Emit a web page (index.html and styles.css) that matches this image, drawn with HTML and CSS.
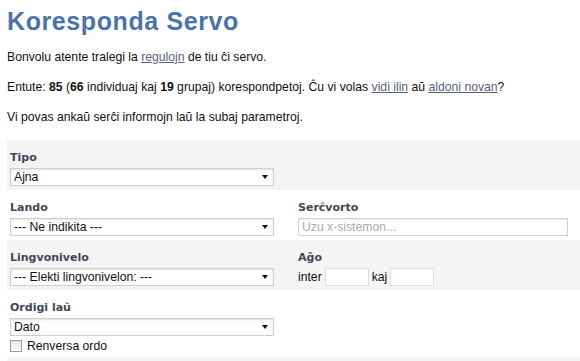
FILE: index.html
```html
<!DOCTYPE html>
<html>
<head>
  <meta charset="utf-8">
  <title>Koresponda Servo</title>
  <link rel="stylesheet" href="styles.css">
</head>

<body>
    <h1>Koresponda Servo</h1>
    <p>Bonvolu atente tralegi la <a href="#">regulojn</a> de tiu ĉi servo.</p>
    <p>Entute: <b>85</b> (<b>66</b> individuaj kaj <b>19</b> grupaj) korespondpetoj. Ĉu vi volas <a href="#">vidi ilin</a> aŭ <a href="#">aldoni novan</a>?</p>
    <p>Vi povas ankaŭ serĉi informojn laŭ la subaj parametroj.</p>

    <form class="search">
        <div class="row grey">
            <div class="field">
                <label>Tipo</label>
                <div class="select"><span>Ajna</span><i class="arrow"></i></div>
            </div>
        </div>
        <div class="row">
            <div class="field">
                <label>Lando</label>
                <div class="select"><span>--- Ne indikita ---</span><i class="arrow"></i></div>
            </div>
            <div class="field right">
                <label>Serĉvorto</label>
                <input type="text" class="text" placeholder="Uzu x-sistemon...">
            </div>
        </div>
        <div class="row grey">
            <div class="field">
                <label>Lingvonivelo</label>
                <div class="select"><span>--- Elekti lingvonivelon: ---</span><i class="arrow"></i></div>
            </div>
            <div class="field right">
                <label>Aĝo</label>
                <div class="age">inter <input type="text" class="small"> kaj <input type="text" class="small"></div>
            </div>
        </div>
        <div class="row tall">
            <div class="field">
                <label>Ordigi laŭ</label>
                <div class="select"><span>Dato</span><i class="arrow"></i></div>
                <div class="check"><span class="box"></span>Renversa ordo</div>
            </div>
        </div>
        <div class="row grey last"></div>
    </form>
</body>
</html>
```

FILE: styles.css
```css
body {
    margin: 0 0 0 7px;
    font-family: "Liberation Sans", Arial, sans-serif;
    font-size: 12.2px;
    color: #111;
    background: #fff;
}

h1 {
    font-family: "Liberation Sans", Arial, sans-serif;
    font-size: 25px;
    font-weight: bold;
    letter-spacing: 0.6px;
    color: #4a73ab;
    margin: 7px 0 0 0;
    line-height: 28px;
}

p {
    margin: 15px 0 0 0;
    line-height: 15px;
}

a {
    color: #56627e;
}

.search {
    margin-top: 15px;
}

.row {
    display: grid;
    grid-template-columns: 288px 1fr;
    height: 50px;
}

.row.tall {
    height: 67px;
}

.grey {
    background: #f4f4f4;
}

.last {
    height: 10px;
}

.field {
    padding: 10px 0 0 3px;
}

.field.right {
    padding-left: 3px;
}

label {
    display: block;
    font-family: "DejaVu Sans", Verdana, sans-serif;
    font-weight: bold;
    font-size: 11px;
    color: #3e4856;
    height: 16px;
    line-height: 16px;
    margin-bottom: 2px;
}

.select {
    display: flex;
    align-items: center;
    justify-content: space-between;
    box-sizing: border-box;
    width: 264px;
    height: 18px;
    padding: 0 5px 0 3px;
    background: #fff;
    border: 1px solid #cfcfcf;
    box-shadow: inset 0 1px 2px rgba(0, 0, 0, 0.12);
    font-size: 12.2px;
}

.arrow {
    width: 0;
    height: 0;
    border-left: 3.5px solid transparent;
    border-right: 3.5px solid transparent;
    border-top: 4px solid #111;
}

.text {
    box-sizing: border-box;
    width: 270px;
    height: 18px;
    margin: 0;
    padding: 0 3px;
    border: 1px solid #d2d2d2;
    box-shadow: inset 0 1px 2px rgba(0, 0, 0, 0.08);
    font-family: "Liberation Sans", Arial, sans-serif;
    font-size: 12.2px;
}

.text::placeholder {
    color: #aaa;
}

.age {
    display: flex;
    align-items: center;
    gap: 3px;
    height: 18px;
}

.small {
    box-sizing: border-box;
    width: 44px;
    height: 18px;
    margin: 0;
    border: 1px solid #dcdcdc;
    background: #fff;
}

.check {
    display: flex;
    align-items: center;
    gap: 5px;
    margin-top: 2px;
    height: 16px;
}

.box {
    display: inline-block;
    box-sizing: border-box;
    width: 12px;
    height: 12px;
    border: 1px solid #999;
    background: linear-gradient(#e8e8e8, #fafafa);
}
```
